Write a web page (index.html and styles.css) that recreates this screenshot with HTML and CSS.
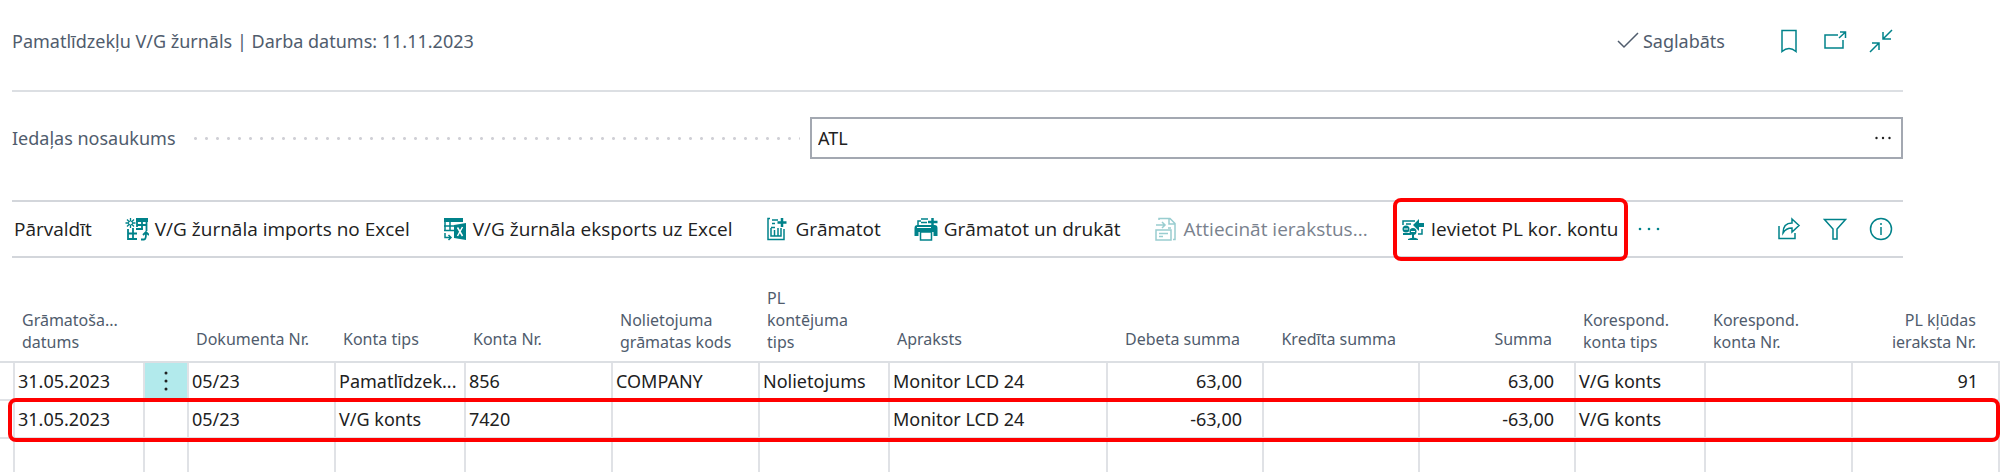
FILE: index.html
```html
<!DOCTYPE html>
<html lang="lv">
<head>
<meta charset="utf-8">
<title>Pamatlīdzekļu V/G žurnāls</title>
<link rel="stylesheet" href="styles.css">
</head>
<body>
<div class="page">
  <header class="titlebar">
    <h1 class="title">Pamatlīdzekļu V/G žurnāls | Darba datums: 11.11.2023</h1>
    <span class="saved"><svg width="22" height="18" viewBox="0 0 22 18" class="line gray"><path d="M1 9l6 6L21 1"/></svg>Saglabāts</span>
    <div class="window-actions">
      <button class="icon-button" aria-label="Grāmatzīme"><svg width="24" height="24" viewBox="0 0 24 24" class="line"><path d="M5 1.500h14v21q-7-6-14 0z"/></svg></button>
      <button class="icon-button" aria-label="Atvērt jaunā logā"><svg width="24" height="24" viewBox="0 0 24 24" class="line"><path d="M15 6H2v13h18v-8M16 9l6-5.500M17 3h5.500v6"/></svg></button>
      <button class="icon-button" aria-label="Sakļaut"><svg width="24" height="24" viewBox="0 0 24 24" class="line"><path d="M23 1l-9 9M14 3v7h8M1 23l9-9M3 14h7v7"/></svg></button>
    </div>
  </header>

  <div class="field">
    <label class="field-label" for="batch">Iedaļas nosaukums</label>
    <span class="leader"></span>
    <div class="lookup">
      <input class="lookup-input" id="batch" type="text" value="ATL">
      <button class="lookup-button" aria-label="Izvēlēties"><svg width="18" height="4" viewBox="0 0 18 4" class="dots dark"><circle cx="2.500" cy="2" r="1.200"/><circle cx="9" cy="2" r="1.200"/><circle cx="15.500" cy="2" r="1.200"/></svg></button>
    </div>
  </div>

  <div class="toolbar">
    <button class="action">Pārvaldīt</button>
    <button class="action"><svg width="24" height="24" viewBox="0 0 24 24"><path fill="none" stroke="#00828a" stroke-width="1.800" d="M3 12v10h9M3 16.500h9M8 11v11M12 8h9M12 3v7M17 4v9M21.500 4v10M11 12h7M16 22.500h3q2 0 2-6M18 18l3-3 3 3"/><path fill="#00828a" d="M11 1h12v4H11z"/><path fill="none" stroke="#00828a" stroke-width="1.300" d="M5.500 1v10M.5 6h10M2 2.500l7 7M9 2.500l-7 7"/><circle cx="5.500" cy="6" r="2" fill="#fff" stroke="#00828a"/></svg>V/G žurnāla imports no Excel</button>
    <button class="action"><svg width="24" height="24" viewBox="0 0 24 24"><path fill="#00828a" d="M1 1h19v4H1zM11 8l12-2v17l-12-2z"/><path fill="none" stroke="#00828a" stroke-width="1.500" d="M2 4v10M7 4v10M1 9h10M1 13.500h10M2 16v4.500h6M5.500 18l2.500 2.500L5.500 23"/><path stroke="#fff" stroke-width="1.500" d="M14.500 10.500l5 8.500M19.500 10l-5 9"/></svg>V/G žurnāla eksports uz Excel</button>
    <button class="action"><svg width="24" height="24" viewBox="0 0 24 24"><g fill="none" stroke="#00828a" stroke-width="1.500"><path d="M5 1.500H3v21h16V12M7 3h6M10 6.500H7M6 10.500h4M6 11v8h10v-8M9.500 13v6M13 11v8"/></g><path stroke="#00828a" stroke-width="2.500" d="M17 1v9M12.500 5.500h9"/></svg>Grāmatot</button>
    <button class="action"><svg width="24" height="24" viewBox="0 0 24 24"><path fill="#00828a" d="M.5 11q0-3 3-3h17q3 0 3 3v8h-4v-4h-15v4h-4z"/><path fill="#fff" stroke="#00828a" stroke-width="1.500" d="M6.500 15h11v8h-11z"/><path fill="none" stroke="#00828a" stroke-width="1.500" d="M4 8V4h3M7 2h7M7 5.500h6"/><path stroke="#00828a" stroke-width="2.500" d="M18.500 1v9M14 5h9.500"/><path stroke="#fff" stroke-width="1" d="M3 10.500h14"/></svg>Grāmatot un drukāt</button>
    <button class="action" disabled><svg width="24" height="24" viewBox="0 0 24 24"><g fill="none" stroke="#99cdd0" stroke-width="1.500"><path d="M5 3V1.500h11l5 5V22.500h-2M15 2v5h6M2 8h9M8 5l3 3-3 3M2 13h15v10H2zM5 16.500h9M5 19.500h4M14 11h3"/></g></svg>Attiecināt ierakstus...</button>
    <div class="highlight">
      <button class="action"><svg width="24" height="24" viewBox="0 0 24 24"><path fill="none" stroke="#00828a" stroke-width="1.500" d="M2 8V4h12M5 7h5M21 12v5h-4"/><path fill="#00828a" d="M12 8l6-6v4h5v4h-5v4zM7 22q6-3 10 0v1H7zM11 17h2v4h-2z"/><circle cx="5" cy="12" r="3.500" fill="#00828a"/><circle cx="12" cy="14.500" r="3.500" fill="#00828a"/><path stroke="#fff" d="M3 12h4M10 14.500h4"/><path stroke="#00828a" stroke-width="2" d="M2 17h8"/></svg>Ievietot PL kor. kontu</button>
    </div>
    <button class="icon-button" aria-label="Vairāk"><svg width="24" height="4" viewBox="0 0 24 4" class="dots"><circle cx="3" cy="2" r="1.300"/><circle cx="12" cy="2" r="1.300"/><circle cx="21" cy="2" r="1.300"/></svg></button>
    <div class="toolbar-end">
      <button class="icon-button" aria-label="Kopīgot"><svg width="24" height="24" viewBox="0 0 24 24" class="line"><path d="M2 9v12.500h16V16M15 2l7 6.500-7 6.500v-4q-6 0-9 5 0-10 9-10z"/></svg></button>
      <button class="icon-button" aria-label="Filtrs"><svg width="24" height="24" viewBox="0 0 24 24" class="line"><path d="M1.500 2.500h21L14 12v10h-4V12z"/></svg></button>
      <button class="icon-button" aria-label="Informācija"><svg width="24" height="24" viewBox="0 0 24 24" class="line"><circle cx="12" cy="12" r="10.500"/><path d="M12 10v8M12 6v2"/></svg></button>
    </div>
  </div>
</div>

<table class="grid">
  <colgroup><col class="c-gutter"><col class="c-s"><col class="c-menu"><col class="c-m"><col class="c-s"><col class="c-m"><col class="c-m"><col class="c-s"><col class="c-xl"><col class="c-l"><col class="c-l"><col class="c-l"><col class="c-s"><col class="c-m"><col class="c-m"></colgroup>
  <thead>
    <tr>
      <th></th><th>Grāmatoša...<br>datums</th><th></th><th class="single">Dokumenta Nr.</th><th class="single">Konta tips</th><th class="single">Konta Nr.</th><th>Nolietojuma<br>grāmatas kods</th><th>PL<br>kontējuma<br>tips</th><th class="single">Apraksts</th><th class="single num">Debeta summa</th><th class="single num">Kredīta summa</th><th class="single num">Summa</th><th>Korespond.<br>konta tips</th><th>Korespond.<br>konta Nr.</th><th class="num">PL kļūdas<br>ieraksta Nr.</th>
    </tr>
  </thead>
  <tbody>
    <tr>
      <td></td><td>31.05.2023</td><td class="menu"><button class="icon-button row-menu" aria-label="Rindas izvēlne"><svg width="4" height="20" viewBox="0 0 4 20" class="dots dark"><circle cx="2" cy="2" r="1.500"/><circle cx="2" cy="10" r="1.500"/><circle cx="2" cy="18" r="1.500"/></svg></button></td><td>05/23</td><td>Pamatlīdzek...</td><td>856</td><td>COMPANY</td><td>Nolietojums</td><td>Monitor LCD 24</td><td class="num">63,00</td><td></td><td class="num">63,00</td><td>V/G konts</td><td></td><td class="num">91</td>
    </tr>
    <tr class="marked">
      <td></td><td>31.05.2023</td><td></td><td>05/23</td><td>V/G konts</td><td>7420</td><td></td><td></td><td>Monitor LCD 24</td><td class="num">-63,00</td><td></td><td class="num">-63,00</td><td>V/G konts</td><td></td><td></td>
    </tr>
    <tr class="empty">
      <td></td><td></td><td></td><td></td><td></td><td></td><td></td><td></td><td></td><td></td><td></td><td></td><td></td><td></td><td></td>
    </tr>
  </tbody>
</table>
</body>
</html>
```
FILE: styles.css
```css
* { box-sizing: border-box; }

body {
  margin: 0;
  background: #fff;
  color: #212121;
  font: 18px/24px "Noto Sans", "Open Sans", sans-serif;
}

svg { display: block; flex: none; }

.line { fill: none; stroke: #00828a; stroke-width: 1.5; }
.line.gray { stroke: #505c6d; }
.dots { fill: #00828a; }
.dots.dark { fill: #212121; }

button {
  padding: 0;
  border: 0;
  background: none;
  color: inherit;
  font: inherit;
}

.page { padding: 0 97px 0 12px; }

.titlebar {
  display: flex;
  align-items: center;
  height: 92px;
  padding: 0 10px 8px 0;
  border-bottom: 2px solid #dcdfe3;
  color: #505c6d;
}

.title { margin: 0 auto 0 0; font-size: 18px; font-weight: 400; }

.saved { display: flex; align-items: center; gap: 4px; }

.window-actions { display: flex; gap: 22px; margin-left: 52px; }

.field {
  display: flex;
  align-items: center;
  height: 108px;
  padding-bottom: 16px;
}

.field-label { color: #505c6d; }

.leader {
  flex: 1;
  height: 3px;
  margin: 0 10px 0 14px;
  background: radial-gradient(circle, #d0d0d6 1px, transparent 2px) 0 0 / 11px 3px repeat-x;
}

.lookup {
  display: flex;
  align-items: center;
  width: 1093px;
  max-width: 58%;
  height: 42px;
  padding: 0 9px 0 6px;
  border: 2px solid #a3a8b1;
}

.lookup-input {
  flex: 1;
  min-width: 0;
  padding: 0;
  border: 0;
  outline: 0;
  background: none;
  color: inherit;
  font: inherit;
}

.toolbar {
  display: flex;
  align-items: center;
  gap: 33px;
  height: 58px;
  padding: 0 10px 0 2px;
  border: solid #d3d6db;
  border-width: 2px 0;
  font-family: "Open Sans", "Noto Sans", sans-serif;
  font-size: 19px;
}

.action {
  display: flex;
  align-items: center;
  gap: 6px;
  white-space: nowrap;
}

.action:disabled { color: #7a828e; }

.highlight {
  display: flex;
  align-items: center;
  height: 63px;
  margin: 0 -24px 0 -8px;
  padding: 0 6px 0 4px;
  border: 4px solid #f00;
  border-radius: 8px;
}

.toolbar-end { display: flex; gap: 22px; margin-left: auto; }

.grid {
  width: 100%;
  margin-top: 22px;
  border-collapse: separate;
  border-spacing: 0;
  table-layout: fixed;
}

.c-gutter { width: 15px; }
.c-menu { width: 44px; }
.c-s { width: 130px; }
.c-m { width: 147px; }
.c-l { width: 156px; }
.c-xl { width: 218px; }

th {
  height: 83px;
  padding: 0 0 8px 7px;
  border-bottom: 2px solid #dcdfe3;
  color: #505c6d;
  font-size: 16px;
  font-weight: 400;
  line-height: 22px;
  text-align: left;
  vertical-align: bottom;
  white-space: nowrap;
}

th.single { padding-bottom: 11px; }
th.num { padding-right: 24px; }

td {
  height: 38px;
  padding: 0 0 0 3px;
  border: solid #e0e2e6;
  border-width: 0 2px 2px 0;
  white-space: nowrap;
}

.num { text-align: right; }
td.num { padding-right: 20px; }

td.menu { padding: 0; background: #b2eaec; }

.row-menu { display: block; margin: 0 auto; }

.marked { position: relative; }

.marked::after {
  content: "";
  position: absolute;
  inset: -3px 0 -3px 8px;
  border: 4px solid #f00;
  border-radius: 8px;
}

.empty td { height: 34px; border-bottom: 0; }
```
